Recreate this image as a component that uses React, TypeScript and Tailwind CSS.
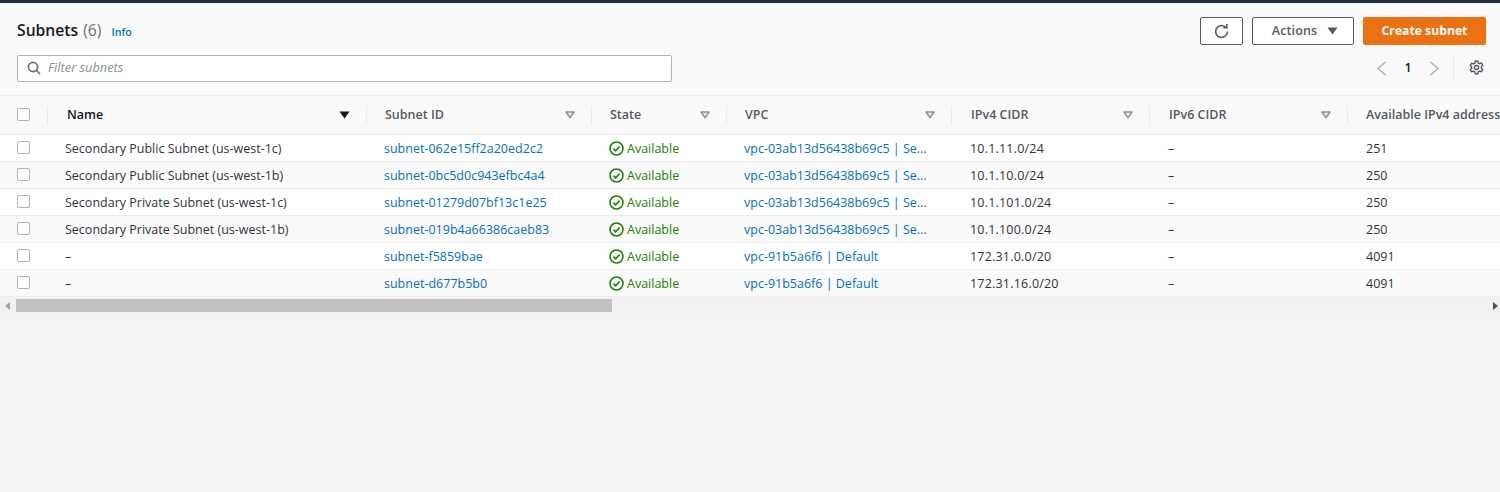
import React from "react";

const FONT = "[font-family:'Open_Sans','Noto_Sans',sans-serif]";

const widths = ["w-[48px]", "w-[319px]", "w-[225px]", "w-[135px]", "w-[225px]", "w-[198px]", "w-[198px]", "w-[152px]"];

const rows = [
  ["Secondary Public Subnet (us-west-1c)", "subnet-062e15ff2a20ed2c2", "vpc-03ab13d56438b69c5 | Se...", "10.1.11.0/24", "251"],
  ["Secondary Public Subnet (us-west-1b)", "subnet-0bc5d0c943efbc4a4", "vpc-03ab13d56438b69c5 | Se...", "10.1.10.0/24", "250"],
  ["Secondary Private Subnet (us-west-1c)", "subnet-01279d07bf13c1e25", "vpc-03ab13d56438b69c5 | Se...", "10.1.101.0/24", "250"],
  ["Secondary Private Subnet (us-west-1b)", "subnet-019b4a66386caeb83", "vpc-03ab13d56438b69c5 | Se...", "10.1.100.0/24", "250"],
  ["–", "subnet-f5859bae", "vpc-91b5a6f6 | Default", "172.31.0.0/20", "4091"],
  ["–", "subnet-d677b5b0", "vpc-91b5a6f6 | Default", "172.31.16.0/20", "4091"],
];

function Checkbox() {
  return <div className="w-[13px] h-[13px] ml-[17px] bg-white border border-[#aab7b8] rounded-[2px] shrink-0" />;
}

function SortHollow() {
  return (
    <svg width="10" height="8" viewBox="0 0 10 8" className="shrink-0">
      <path d="M1 1h8L5 6.6z" fill="#eaeded" stroke="#879596" strokeWidth="1.5" strokeLinejoin="round" />
    </svg>
  );
}

function SortSolid() {
  return (
    <svg width="11" height="8" viewBox="0 0 11 8" className="shrink-0">
      <path d="M0.5 0.5h10L5.5 7.5z" fill="#16191f" />
    </svg>
  );
}

function HeaderCell({ width, label, dark, solid, last, shift }: { width: string; label: string; dark?: boolean; solid?: boolean; last?: boolean; shift?: boolean }) {
  return (
    <div className={`${width} shrink-0 h-full flex items-center relative ${shift ? "pl-[19px]" : "pl-[18px]"} pr-[17px] justify-between`}>
      <span className={`text-[12.5px] font-semibold whitespace-nowrap ${dark ? "text-[#16191f]" : "text-[#545b64]"}`}>{label}</span>
      {!last && (solid ? <SortSolid /> : <SortHollow />)}
      {!last && <div className="absolute right-0 top-[10px] h-[19px] w-px bg-[#eaeded]" />}
    </div>
  );
}

function CheckCircle() {
  return (
    <svg width="15" height="15" viewBox="0 0 16 16" fill="none" className="shrink-0">
      <circle cx="8" cy="8" r="6.9" stroke="#1d8102" strokeWidth="1.7" />
      <path d="M4.8 8.1l2.3 2.3 4.2-4.6" stroke="#1d8102" strokeWidth="1.7" />
    </svg>
  );
}

export default function App() {
  return (
    <div className={`w-[1500px] h-[492px] overflow-hidden bg-[#f2f3f3] ${FONT}`}>
      <div className="h-[3px] bg-[#232f3e]" />
      <div className="h-px bg-[#eaeded]" />
      <div className="h-[91px] bg-[#fafafa] px-[17px] flex flex-col border-b border-[#eaeded] box-content">
        <div className="flex items-center justify-between pt-[13px] h-[41px]">
          <div className="flex items-baseline">
            <span className="text-[15.7px] font-semibold text-[#16191f]">Subnets</span>
            <span className="text-[15.7px] text-[#687078] ml-[5px]">(6)</span>
            <span className="text-[10.7px] font-semibold text-[#0073bb] ml-[10px]">Info</span>
          </div>
          <div className="flex items-center gap-[9px] mr-[-3px]">
            <button className="w-[43px] h-[28px] flex items-center justify-center bg-white border border-[#545b64] rounded-[2px]">
              <svg width="17" height="17" viewBox="0 0 16 16" fill="none" stroke="#545b64" strokeWidth="1.5">
                <path d="M13.6 8a5.6 5.6 0 1 1-2-4.3" />
                <path d="M13 1v3.4H9.6" />
              </svg>
            </button>
            <button className="w-[102px] h-[28px] flex items-center justify-center gap-[10px] pl-[4px] bg-white border border-[#545b64] rounded-[2px]">
              <span className="text-[12.5px] font-semibold text-[#545b64] tracking-[0.1px]">Actions</span>
              <svg width="11" height="8" viewBox="0 0 11 8"><path d="M0.5 0.5h10L5.5 7.5z" fill="#545b64" /></svg>
            </button>
            <button className="w-[123px] h-[28px] flex items-center justify-center bg-[#ec7211] rounded-[2px]">
              <span className="text-[12.2px] font-bold text-white">Create subnet</span>
            </button>
          </div>
        </div>
        <div className="flex items-center justify-between mt-[9px]">
          <div className="w-[655px] h-[27px] bg-white border border-[#aab7b8] rounded-[2px] flex items-center pl-[9px]">
            <svg width="14" height="14" viewBox="0 0 14 14" fill="none" stroke="#687078" strokeWidth="1.7">
              <circle cx="6" cy="6" r="4.6" />
              <path d="M9.4 9.4L13 13" />
            </svg>
            <span className="text-[12.8px] italic text-[#879596] ml-[7px]">Filter subnets</span>
          </div>
          <div className="flex items-center h-[28px] mr-[-1px]">
            <svg width="11" height="15" viewBox="0 0 11 15" fill="none" stroke="#aab7b8" strokeWidth="1.5"><path d="M9.5 1L2 7.5 9.5 14" /></svg>
            <span className="text-[12.5px] font-semibold text-[#16191f] w-[42px] text-center">1</span>
            <svg width="11" height="15" viewBox="0 0 11 15" fill="none" stroke="#aab7b8" strokeWidth="1.5"><path d="M1.5 1L9 7.5 1.5 14" /></svg>
            <div className="w-px h-[28px] bg-[#eaeded] ml-[13px] mr-[15px]" />
            <svg width="15" height="15" viewBox="0 0 16 16" fill="none" stroke="#545b64" strokeWidth="1.5" className="mb-[2px]">
              <path d="M6.6 1h2.8l.4 2 1.6.9 1.9-.7 1.4 2.4-1.5 1.3v1.9l1.5 1.3-1.4 2.4-1.9-.7-1.6.9-.4 2H6.6l-.4-2-1.6-.9-1.9.7-1.4-2.4 1.5-1.3V7.2L1.3 5.9l1.4-2.4 1.9.7 1.6-.9z" strokeLinejoin="round" />
              <circle cx="8" cy="8" r="2.2" />
            </svg>
          </div>
        </div>
      </div>

      <div className="h-[38px] bg-[#fafafa] flex items-center border-b border-[#eaeded] box-content overflow-hidden">
        <div className={`${widths[0]} shrink-0 h-full flex items-center relative`}>
          <div className="pb-[2px]"><Checkbox /></div>
          <div className="absolute right-0 top-[10px] h-[19px] w-px bg-[#eaeded]" />
        </div>
        <HeaderCell width={widths[1]} label="Name" dark solid shift />
        <HeaderCell width={widths[2]} label="Subnet ID" />
        <HeaderCell width={widths[3]} label="State" />
        <HeaderCell width={widths[4]} label="VPC" />
        <HeaderCell width={widths[5]} label="IPv4 CIDR" shift />
        <HeaderCell width={widths[6]} label="IPv6 CIDR" shift />
        <HeaderCell width={widths[7]} label="Available IPv4 addresses" last />
      </div>

      {rows.map((r, i) => (
        <div key={i} className={`h-[26px] box-content flex items-center border-b border-[#eaeded] text-[12.5px] text-[#31353b] overflow-hidden ${i % 2 ? "bg-[#fafafa]" : "bg-white"}`}>
          <div className={`${widths[0]} shrink-0 flex items-center pb-[2px]`}><Checkbox /></div>
          <div className={`${widths[1]} shrink-0 pl-[17px] pt-[2px] whitespace-nowrap`}>{r[0]}</div>
          <div className={`${widths[2]} shrink-0 pl-[17px] pt-[2px] text-[#0073bb] whitespace-nowrap`}>{r[1]}</div>
          <div className={`${widths[3]} shrink-0 pl-[17px] flex items-center gap-[3px] text-[#1d8102]`}>
            <CheckCircle />
            <span className="pt-[2px]">Available</span>
          </div>
          <div className={`${widths[4]} shrink-0 pl-[17px] pt-[2px] text-[#0073bb] whitespace-nowrap`}>{r[2]}</div>
          <div className={`${widths[5]} shrink-0 pl-[18px] pt-[2px] whitespace-nowrap tracking-[0.2px]`}>{r[3]}</div>
          <div className={`${widths[6]} shrink-0 pl-[18px] pt-[2px]`}>–</div>
          <div className={`${widths[7]} shrink-0 pl-[18px] pt-[2px]`}>{r[4]}</div>
        </div>
      ))}

      <div className="h-[17px] bg-[#f1f1f1] flex items-center justify-between relative">
        <svg width="5" height="8" viewBox="0 0 5 8" className="ml-[5px] shrink-0"><path d="M5 0v8L0 4z" fill="#a3a3a3" /></svg>
        <div className="w-[596px] h-[13px] bg-[#c1c1c1] absolute left-[16px] top-[2px]" />
        <svg width="5" height="8" viewBox="0 0 5 8" className="mr-[2px] shrink-0"><path d="M0 0v8l5-4z" fill="#505050" /></svg>
      </div>
    </div>
  );
}
